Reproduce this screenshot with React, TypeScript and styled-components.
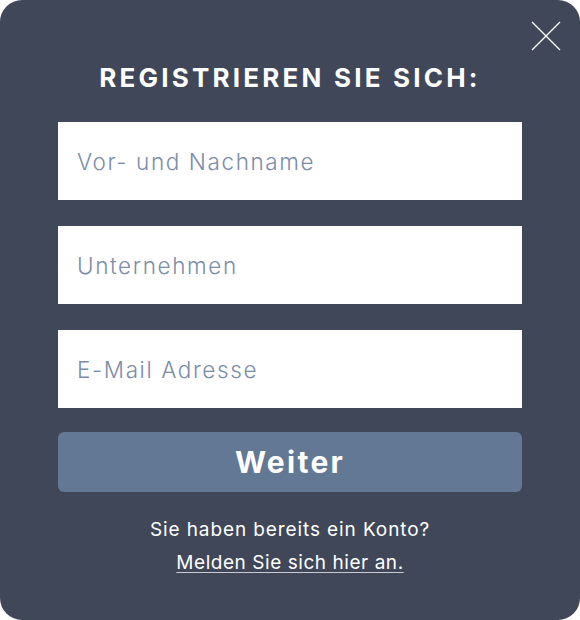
import styled, { createGlobalStyle } from "styled-components";

const GlobalStyle = createGlobalStyle`
  html, body {
    margin: 0;
    padding: 0;
    background: #ffffff;
  }
`;

const Panel = styled.div`
  position: relative;
  box-sizing: border-box;
  width: 580px;
  height: 620px;
  background: #3f4759;
  border-radius: 22px;
  padding: 62px 58px 0;
  font-family: "Inter", "Lato", sans-serif;
  color: #ffffff;
`;

const CloseButton = styled.button`
  position: absolute;
  top: 21px;
  right: 19px;
  width: 30px;
  height: 30px;
  padding: 0;
  border: none;
  background: none;
  cursor: pointer;
  display: flex;
`;

const Title = styled.h1`
  margin: 0 0 28px;
  font-size: 26px;
  line-height: 32px;
  font-weight: 700;
  letter-spacing: 3.2px;
  text-align: center;
`;

const Form = styled.form`
  display: flex;
  flex-direction: column;
  gap: 26px;
`;

const Field = styled.input`
  box-sizing: border-box;
  width: 100%;
  height: 78px;
  border: none;
  outline: none;
  padding: 0 19px;
  background: #ffffff;
  font-family: inherit;
  font-size: 22.5px;
  font-weight: 300;
  letter-spacing: 1.6px;
  color: #3f4759;

  &::placeholder {
    color: #7b8ca8;
    opacity: 1;
  }
`;

const Submit = styled.button`
  height: 60px;
  margin-top: -2px;
  border: none;
  border-radius: 6px;
  background: #627894;
  color: #ffffff;
  font-family: inherit;
  font-size: 30px;
  font-weight: 700;
  letter-spacing: 2.3px;
  cursor: pointer;
`;

const Footer = styled.div`
  display: flex;
  flex-direction: column;
  align-items: center;
  gap: 4px;
  margin-top: 23px;
  font-size: 19px;
  font-weight: 400;
  line-height: 29px;
  letter-spacing: 0.9px;
`;

const LoginLink = styled.a`
  color: #ffffff;
  letter-spacing: 0.55px;
  text-decoration: underline;
  text-underline-offset: 3px;
  text-decoration-color: #c9ccd3;
`;

export default function App() {
  return (
    <>
      <GlobalStyle />
      <Panel>
        <CloseButton aria-label="Schließen">
          <svg width="30" height="30" viewBox="0 0 30 30">
            <path d="M1 1 L29 29 M29 1 L1 29" stroke="#ffffff" strokeWidth="1.4" fill="none" />
          </svg>
        </CloseButton>
        <Title>REGISTRIEREN SIE SICH:</Title>
        <Form onSubmit={(e) => e.preventDefault()}>
          <Field type="text" placeholder="Vor- und Nachname" />
          <Field type="text" placeholder="Unternehmen" />
          <Field type="email" placeholder="E-Mail Adresse" />
          <Submit type="submit">Weiter</Submit>
        </Form>
        <Footer>
          <span>Sie haben bereits ein Konto?</span>
          <LoginLink href="#">Melden Sie sich hier an.</LoginLink>
        </Footer>
      </Panel>
    </>
  );
}
